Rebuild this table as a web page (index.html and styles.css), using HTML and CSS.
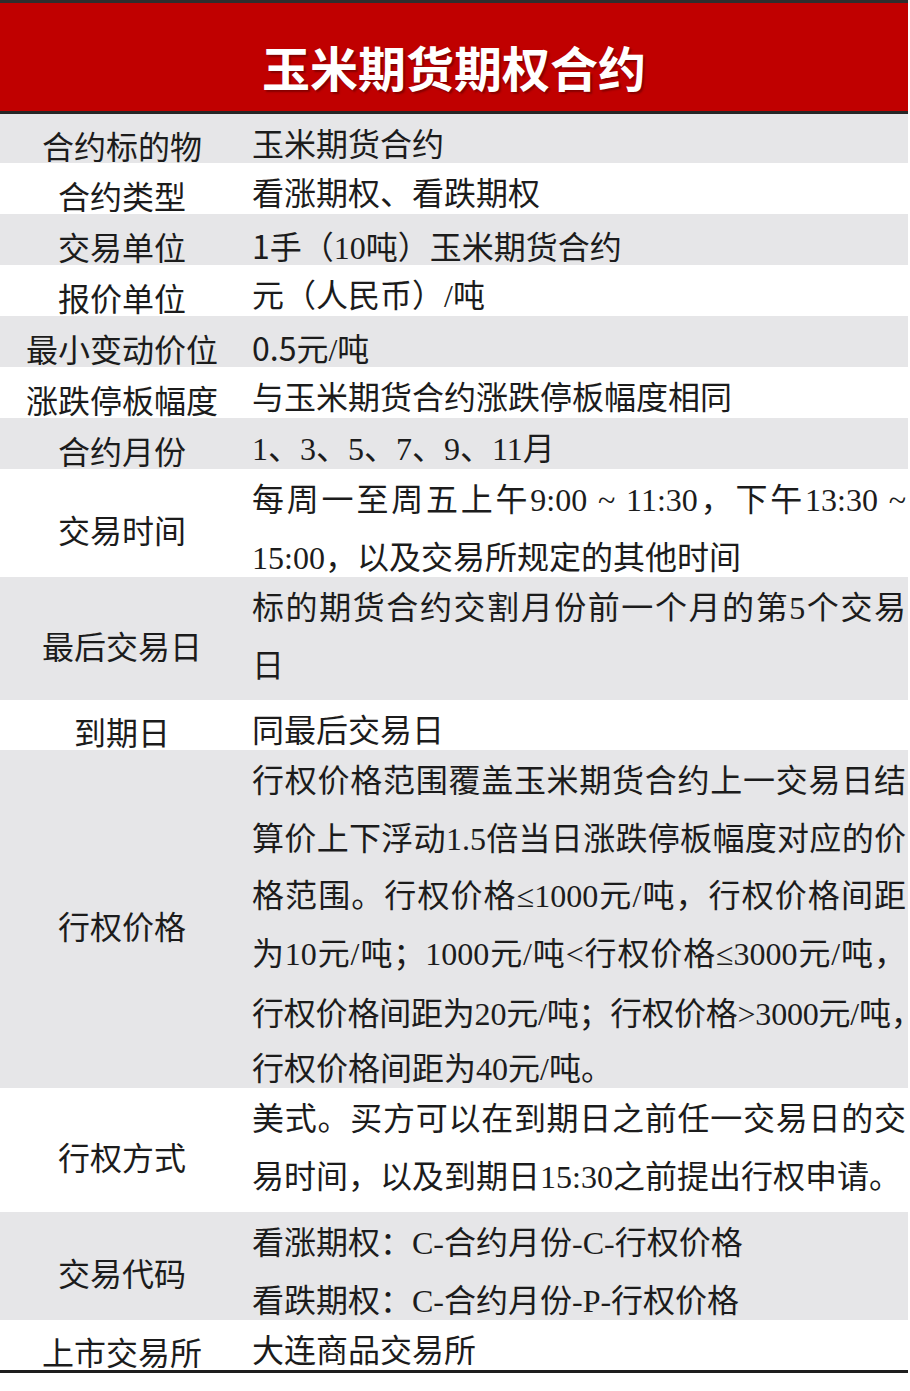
FILE: index.html
```html
<!DOCTYPE html>
<html lang="zh-CN">
<head>
<meta charset="utf-8">
<title>玉米期货期权合约</title>
<link rel="stylesheet" href="styles.css">
</head>
<body>
<div class="sheet">
  <header class="title"><h1>玉米期货期权合约</h1></header>
  <div class="rows">
    <div class="row"><div class="label">合约标的物</div><div class="value"><span class="ln">玉米期货合约</span></div></div>
    <div class="row"><div class="label">合约类型</div><div class="value"><span class="ln">看涨期权、看跌期权</span></div></div>
    <div class="row"><div class="label">交易单位</div><div class="value"><span class="ln"><span class="sans">1</span>手（10吨）玉米期货合约</span></div></div>
    <div class="row"><div class="label">报价单位</div><div class="value"><span class="ln">元（人民币）/吨</span></div></div>
    <div class="row"><div class="label">最小变动价位</div><div class="value"><span class="ln"><span class="sans">0.5</span>元/吨</span></div></div>
    <div class="row"><div class="label">涨跌停板幅度</div><div class="value"><span class="ln">与玉米期货合约涨跌停板幅度相同</span></div></div>
    <div class="row"><div class="label">合约月份</div><div class="value"><span class="ln">1、3、5、7、9、11月</span></div></div>
    <div class="row"><div class="label">交易时间</div><div class="value"><span class="ln j">每周一至周五上午9:00 ~ 11:30，下午13:30 ~</span><span class="ln">15:00，以及交易所规定的其他时间</span></div></div>
    <div class="row"><div class="label">最后交易日</div><div class="value"><span class="ln j">标的期货合约交割月份前一个月的第5个交易</span><span class="ln">日</span></div></div>
    <div class="row"><div class="label">到期日</div><div class="value"><span class="ln">同最后交易日</span></div></div>
    <div class="row"><div class="label">行权价格</div><div class="value"><span class="ln j">行权价格范围覆盖玉米期货合约上一交易日结</span><span class="ln j">算价上下浮动1.5倍当日涨跌停板幅度对应的价</span><span class="ln j">格范围。行权价格≤1000元/吨，行权价格间距</span><span class="ln j">为10元/吨；1000元/吨&lt;行权价格≤3000元/吨，</span><span class="ln tight">行权价格间距为20元/吨；行权价格&gt;3000元/吨<span class="half">，</span></span><span class="ln">行权价格间距为40元/吨。</span></div></div>
    <div class="row"><div class="label">行权方式</div><div class="value"><span class="ln j">美式。买方可以在到期日之前任一交易日的交</span><span class="ln">易时间，以及到期日15:30之前提出行权申请。</span></div></div>
    <div class="row"><div class="label">交易代码</div><div class="value"><span class="ln">看涨期权：C-合约月份-C-行权价格</span><span class="ln">看跌期权：C-合约月份-P-行权价格</span></div></div>
    <div class="row"><div class="label">上市交易所</div><div class="value"><span class="ln">大连商品交易所</span></div></div>
  </div>
</div>
</body>
</html>
```

FILE: styles.css
```css
html, body {
  margin: 0;
  padding: 0;
  background: #ffffff;
}

body {
  font-family: "Liberation Serif", "Noto Sans CJK SC", serif;
  color: #1c1c1c;
}

.sheet {
  width: 908px;
  overflow: hidden;
}

.title {
  background: #c00000;
  border-top: 3px solid #2e2e2e;
  border-bottom: 3px solid #262626;
  height: 90px;
  padding-top: 18px;
  display: flex;
  align-items: center;
  justify-content: center;
}

.title h1 {
  margin: 0;
  font-family: "Noto Sans CJK SC", sans-serif;
  font-weight: 700;
  font-size: 48px;
  line-height: 48px;
  color: #ffffff;
  text-shadow: 2px 2px 2px rgba(60, 0, 0, 0.45);
}

.rows {
  border-bottom: 3px solid #1e1e1e;
}

.row {
  display: grid;
  grid-template-columns: 244px 1fr;
  grid-template-rows: minmax(0, 1fr);
  background: #ffffff;
}

.row:nth-child(odd) {
  background: #e6e6e8;
}

.row:nth-child(1) { height: 49px; }
.row:nth-child(2),
.row:nth-child(3),
.row:nth-child(4),
.row:nth-child(5),
.row:nth-child(6),
.row:nth-child(7) { height: 51px; }
.row:nth-child(8) { height: 108px; }
.row:nth-child(9) { height: 123px; }
.row:nth-child(10) { height: 50px; }
.row:nth-child(11) { height: 338px; }
.row:nth-child(12) { height: 124px; }
.row:nth-child(13) { height: 108px; }
.row:nth-child(14) { height: 50px; }

.label {
  align-self: center;
  padding-top: 12px;
  font-family: "Noto Sans CJK SC", sans-serif;
  font-size: 32px;
  line-height: 32px;
  text-align: center;
  white-space: nowrap;
}

.value {
  align-self: start;
  padding: 3px 2px 0 8px;
  font-size: 32px;
  line-height: 57.5px;
  white-space: nowrap;
  min-width: 0;
}

.ln {
  display: block;
  height: 57.5px;
  text-align: left;
}

.ln.j {
  text-align: justify;
  text-align-last: justify;
}

.ln.tight {
  letter-spacing: -0.2px;
}

.half {
  font-family: "Noto Sans CJK SC", sans-serif;
  font-feature-settings: "halt";
}

.sans {
  font-family: "Noto Sans CJK SC", sans-serif;
}
```
